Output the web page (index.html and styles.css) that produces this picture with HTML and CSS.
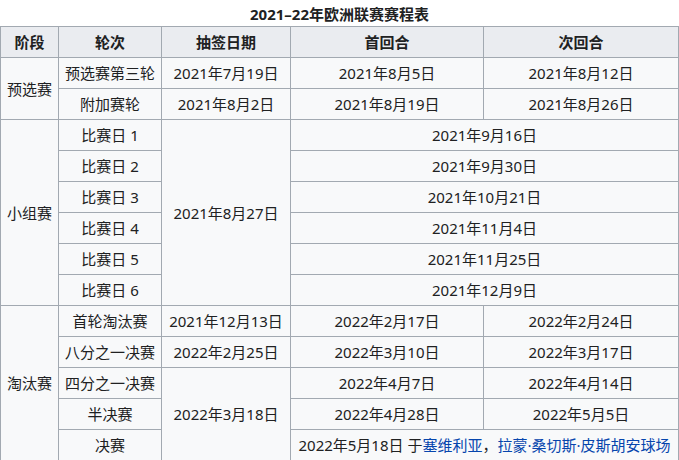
FILE: index.html
```html
<!DOCTYPE html>
<html lang="zh">
<head>
<meta charset="utf-8">
<link rel="stylesheet" href="styles.css">
</head>
<body>
<table class="wikitable">
<caption>2021–22年欧洲联赛赛程表</caption>
<colgroup>
<col class="c1"><col class="c2"><col class="c3"><col class="c4"><col class="c5">
</colgroup>
<thead>
<tr><th>阶段</th><th>轮次</th><th>抽签日期</th><th>首回合</th><th>次回合</th></tr>
</thead>
<tbody>
<tr><td rowspan="2">预选赛</td><td>预选赛第三轮</td><td>2021年7月19日</td><td>2021年8月5日</td><td>2021年8月12日</td></tr>
<tr><td>附加赛轮</td><td>2021年8月2日</td><td>2021年8月19日</td><td>2021年8月26日</td></tr>
<tr><td rowspan="6">小组赛</td><td>比赛日 1</td><td rowspan="6">2021年8月27日</td><td colspan="2">2021年9月16日</td></tr>
<tr><td>比赛日 2</td><td colspan="2">2021年9月30日</td></tr>
<tr><td>比赛日 3</td><td colspan="2">2021年10月21日</td></tr>
<tr><td>比赛日 4</td><td colspan="2">2021年11月4日</td></tr>
<tr><td>比赛日 5</td><td colspan="2">2021年11月25日</td></tr>
<tr><td>比赛日 6</td><td colspan="2">2021年12月9日</td></tr>
<tr><td rowspan="5">淘汰赛</td><td>首轮淘汰赛</td><td>2021年12月13日</td><td>2022年2月17日</td><td>2022年2月24日</td></tr>
<tr><td>八分之一决赛</td><td>2022年2月25日</td><td>2022年3月10日</td><td>2022年3月17日</td></tr>
<tr><td>四分之一决赛</td><td rowspan="3">2022年3月18日</td><td>2022年4月7日</td><td>2022年4月14日</td></tr>
<tr><td>半决赛</td><td>2022年4月28日</td><td>2022年5月5日</td></tr>
<tr><td>决赛</td><td colspan="2">2022年5月18日 于<a href="#">塞维利亚</a>，<a href="#">拉蒙·桑切斯·皮斯胡安球场</a></td></tr>
</tbody>
</table>
</body>
</html>
```
FILE: styles.css
```css
html, body {
  margin: 0;
  padding: 0;
  background: #ffffff;
}
body {
  font-family: "Noto Sans", "Noto Sans CJK SC", sans-serif;
  font-size: 15px;
  color: #202122;
}
.wikitable {
  border-collapse: collapse;
  width: 678px;
  table-layout: fixed;
  background: #f8f9fa;
  border: 1px solid #a2a9b1;
}
.wikitable caption {
  font-weight: bold;
  height: 26px;
  line-height: 28px;
  text-align: center;
  padding: 0;
  background: #ffffff;
}
.c1 { width: 58px; }
.c2 { width: 103px; }
.c3 { width: 129px; }
.c4 { width: 193px; }
.c5 { width: 195px; }
.wikitable th,
.wikitable td {
  border: 1px solid #a2a9b1;
  height: 31px;
  padding: 0 2px;
  box-sizing: border-box;
  text-align: center;
  vertical-align: middle;
  line-height: 20px;
  white-space: nowrap;
}
.wikitable th {
  background: #eaecf0;
  font-weight: bold;
}
.wikitable a {
  color: #0645ad;
  text-decoration: none;
}
```
